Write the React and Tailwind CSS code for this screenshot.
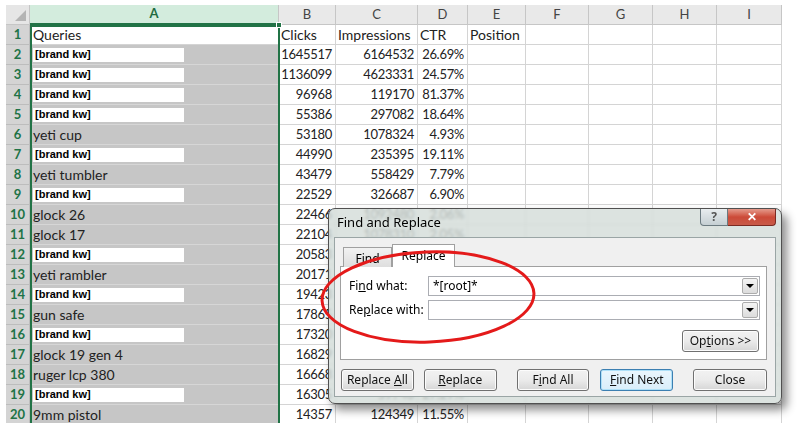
import React from "react";

const COLS = [
  { key: "B", w: "w-[57px]" },
  { key: "C", w: "w-[82px]" },
  { key: "D", w: "w-[50px]" },
  { key: "E", w: "w-[58px]" },
  { key: "F", w: "w-[63px]" },
  { key: "G", w: "w-[64px]" },
  { key: "H", w: "w-[64px]" },
  { key: "I", w: "w-[65px]" },
];

const BRAND = null;

const rows = [
  ["Queries", "Clicks", "Impressions", "CTR", "Position"],
  [BRAND, "1645517", "6164532", "26.69%"],
  [BRAND, "1136099", "4623331", "24.57%"],
  [BRAND, "96968", "119170", "81.37%"],
  [BRAND, "55386", "297082", "18.64%"],
  ["yeti cup", "53180", "1078324", "4.93%"],
  [BRAND, "44990", "235395", "19.11%"],
  ["yeti tumbler", "43479", "558429", "7.79%"],
  [BRAND, "22529", "326687", "6.90%"],
  ["glock 26", "22466", "1092480", "2.06%"],
  ["glock 17", "22104", "1078310", "2.05%"],
  [BRAND, "20583", "96412", "21.35%"],
  ["yeti rambler", "20171", "384210", "5.25%"],
  [BRAND, "19423", "88650", "21.91%"],
  ["gun safe", "17865", "402377", "4.44%"],
  [BRAND, "17320", "70215", "24.67%"],
  ["glock 19 gen 4", "16829", "258910", "6.50%"],
  ["ruger lcp 380", "16668", "301245", "5.53%"],
  [BRAND, "16305", "59740", "27.29%"],
  ["9mm pistol", "14357", "124349", "11.55%"],
];

function Header() {
  return (
    <div className="flex h-[20px] text-[13px]">
      <div className="w-[24px] bg-[#e6e6e6] border-r border-b border-[#c6c6c6] relative">
        <div className="absolute right-[3px] bottom-[3px] w-0 h-0 border-l-[11px] border-l-transparent border-b-[11px] border-b-[#b4b4b4]" />
      </div>
      <div className="w-[249px] bg-[#d3ecdd] border-r border-[#c6c6c6] border-b-2 border-b-[#217346] flex items-center justify-center font-bold text-[#1e6b40]">
        A
      </div>
      {COLS.map((c) => (
        <div
          key={c.key}
          className={`${c.w} bg-[#e9e9e9] border-r border-b border-[#c6c6c6] flex items-center justify-center text-[#444]`}
        >
          {c.key}
        </div>
      ))}
    </div>
  );
}

function Row({ n, data }) {
  const first = n === 1;
  return (
    <div className="flex h-[20px]">
      <div className="w-[24px] bg-[#d4d4d4] border-r border-b border-[#bdbdbd] flex items-center justify-center text-[13px] font-bold text-[#217346]">
        {n}
      </div>
      <div
        className={`w-[249px] border-b flex items-center pl-[3px] ${
          first ? "bg-white border-[#d4d4d4]" : "bg-[#c6c6c6] border-[#d6d6d6]"
        }`}
      >
        {data[0] === null ? (
          <div className="w-[151px] h-[14px] bg-white flex items-center pl-[2px] text-[11px] font-bold text-black font-['Liberation_Sans',sans-serif]">
            [brand kw]
          </div>
        ) : (
          <span className="text-[#222]">{data[0]}</span>
        )}
      </div>
      {COLS.map((c, i) => {
        const v = data[i + 1];
        return (
          <div
            key={c.key}
            className={`${c.w} border-r border-b border-[#d4d4d4] bg-white flex items-center ${
              first ? "justify-start pl-[2px]" : "justify-end pr-[3px] text-[13px] tracking-[-0.3px]"
            } text-[#222] whitespace-nowrap overflow-hidden`}
          >
            {v}
          </div>
        );
      })}
    </div>
  );
}

function Btn({ children, primary, className = "" }) {
  return (
    <div
      className={`h-[22px] flex items-center justify-center rounded-[3px] border text-[12px] text-[#111] whitespace-pre ${
        primary
          ? "border-[#3c7fb1] bg-gradient-to-b from-[#eaf6fd] to-[#d9eefa] shadow-[inset_0_0_0_1px_#aee0f8]"
          : "border-[#707070] bg-gradient-to-b from-[#f2f2f2] via-[#ebebeb] to-[#d6d6d6] shadow-[inset_0_0_0_1px_#fcfcfc]"
      } ${className}`}
    >
      {children}
    </div>
  );
}

function ComboInput({ value }) {
  return (
    <div className="w-[332px] h-[20px] bg-white border border-[#abadb3] flex items-center">
      <div className="flex-1 pl-[4px] text-[12px] text-black">{value}</div>
      <div className="w-[16px] h-[16px] mr-[1px] border border-[#acacac] rounded-[2px] bg-gradient-to-b from-[#f4f4f4] to-[#dcdcdc] flex items-center justify-center">
        <div className="w-0 h-0 border-l-[4px] border-r-[4px] border-t-[4px] border-l-transparent border-r-transparent border-t-black" />
      </div>
    </div>
  );
}

function Dialog() {
  return (
    <div className="absolute left-[328px] top-[208px] w-[454px] h-[196px] rounded-[7px] border border-[#505050] bg-[#d3dcd8]/80 backdrop-blur-[1.5px] shadow-[5px_6px_10px_rgba(0,0,0,0.45)] flex flex-col px-[5px] pb-[6px] font-['Noto_Sans',sans-serif]">
      <div className="h-[28px] flex justify-between">
        <div className="self-center pl-[3px] text-[13px] text-black">Find and Replace</div>
        <div className="flex h-[17px]">
          <div className="w-[28px] border border-[#6b7a80] border-t-0 rounded-bl-[4px] bg-gradient-to-b from-[#e8edef] to-[#c5cfd3] flex items-center justify-center text-[12px] font-bold text-[#555]">
            ?
          </div>
          <div className="w-[48px] border border-[#7a2a22] border-t-0 border-l-0 rounded-br-[4px] bg-gradient-to-b from-[#e49a8c] via-[#cc4a38] to-[#c85a48] flex items-center justify-center text-[12px] font-bold text-white">
            ✕
          </div>
        </div>
      </div>
      <div className="flex-1 bg-[#f0f0f0] border border-[#9aa5a5] pl-[5px] pr-[8px] pt-[6px] flex flex-col">
        <div className="flex items-end pl-[3px] h-[23px] relative z-10">
          <div className="w-[49px] h-[20px] border border-[#a0a0a0] border-b-0 bg-gradient-to-b from-[#f2f2f2] to-[#dedede] flex items-center justify-center pt-[2px] text-[12px] leading-none text-black">
            Find
          </div>
          <div className="w-[63px] h-[23px] border border-[#a0a0a0] border-b-0 bg-white flex items-center justify-center text-[12px] leading-none text-black">
            Replace
          </div>
        </div>
        <div className="h-[94px] -mt-px bg-white border border-[#a0a0a0] pl-[8px] pr-[6px] pt-[9px] flex flex-col">
          <div className="flex items-center justify-between h-[20px]">
            <span className="text-[12px] text-black">
              Fi<u>n</u>d what:
            </span>
            <ComboInput value="*[root]*" />
          </div>
          <div className="flex items-center justify-between h-[20px] mt-[4px]">
            <span className="text-[12px] text-black">
              Re<u>p</u>lace with:
            </span>
            <ComboInput value="" />
          </div>
          <div className="flex justify-end mt-[10px] pr-[1px]">
            <Btn className="w-[77px] h-[21px]">
              Op<u>t</u>ions &gt;&gt;
            </Btn>
          </div>
        </div>
        <div className="flex mt-[9px] pl-[1px]">
          <Btn className="w-[73px]">
            {"Replace "}<u>A</u>ll
          </Btn>
          <Btn className="w-[73px] ml-[10px]">
            <u>R</u>eplace
          </Btn>
          <Btn className="w-[73px] ml-[20px]">
            F<u>i</u>nd All
          </Btn>
          <Btn primary className="w-[73px] ml-[11px]">
            <u>F</u>ind Next
          </Btn>
          <Btn className="w-[74px] ml-[20px]">Close</Btn>
        </div>
      </div>
    </div>
  );
}

export default function App() {
  return (
    <div className="w-[800px] h-[430px] bg-white relative overflow-hidden font-['Lato',sans-serif] text-[14px]">
      <div className="absolute left-[6px] top-[5px] w-[776px] h-[418px] overflow-hidden">
        <Header />
        {rows.map((r, i) => (
          <Row key={i} n={i + 1} data={r} />
        ))}
        {/* column selection outline */}
        <div className="absolute left-[24px] top-[20px] w-[250px] h-[420px] border-2 border-[#217346] pointer-events-none" />
        <div className="absolute left-[270px] top-[17px] w-[6px] h-[6px] bg-[#217346] border border-white" />
      </div>
      <Dialog />
      <svg className="absolute left-0 top-0 pointer-events-none" width="800" height="430">
        <ellipse cx="428" cy="297" rx="106" ry="45" fill="none" stroke="#e41a1a" strokeWidth="3" transform="rotate(-2 428 297)" />
      </svg>
    </div>
  );
}
